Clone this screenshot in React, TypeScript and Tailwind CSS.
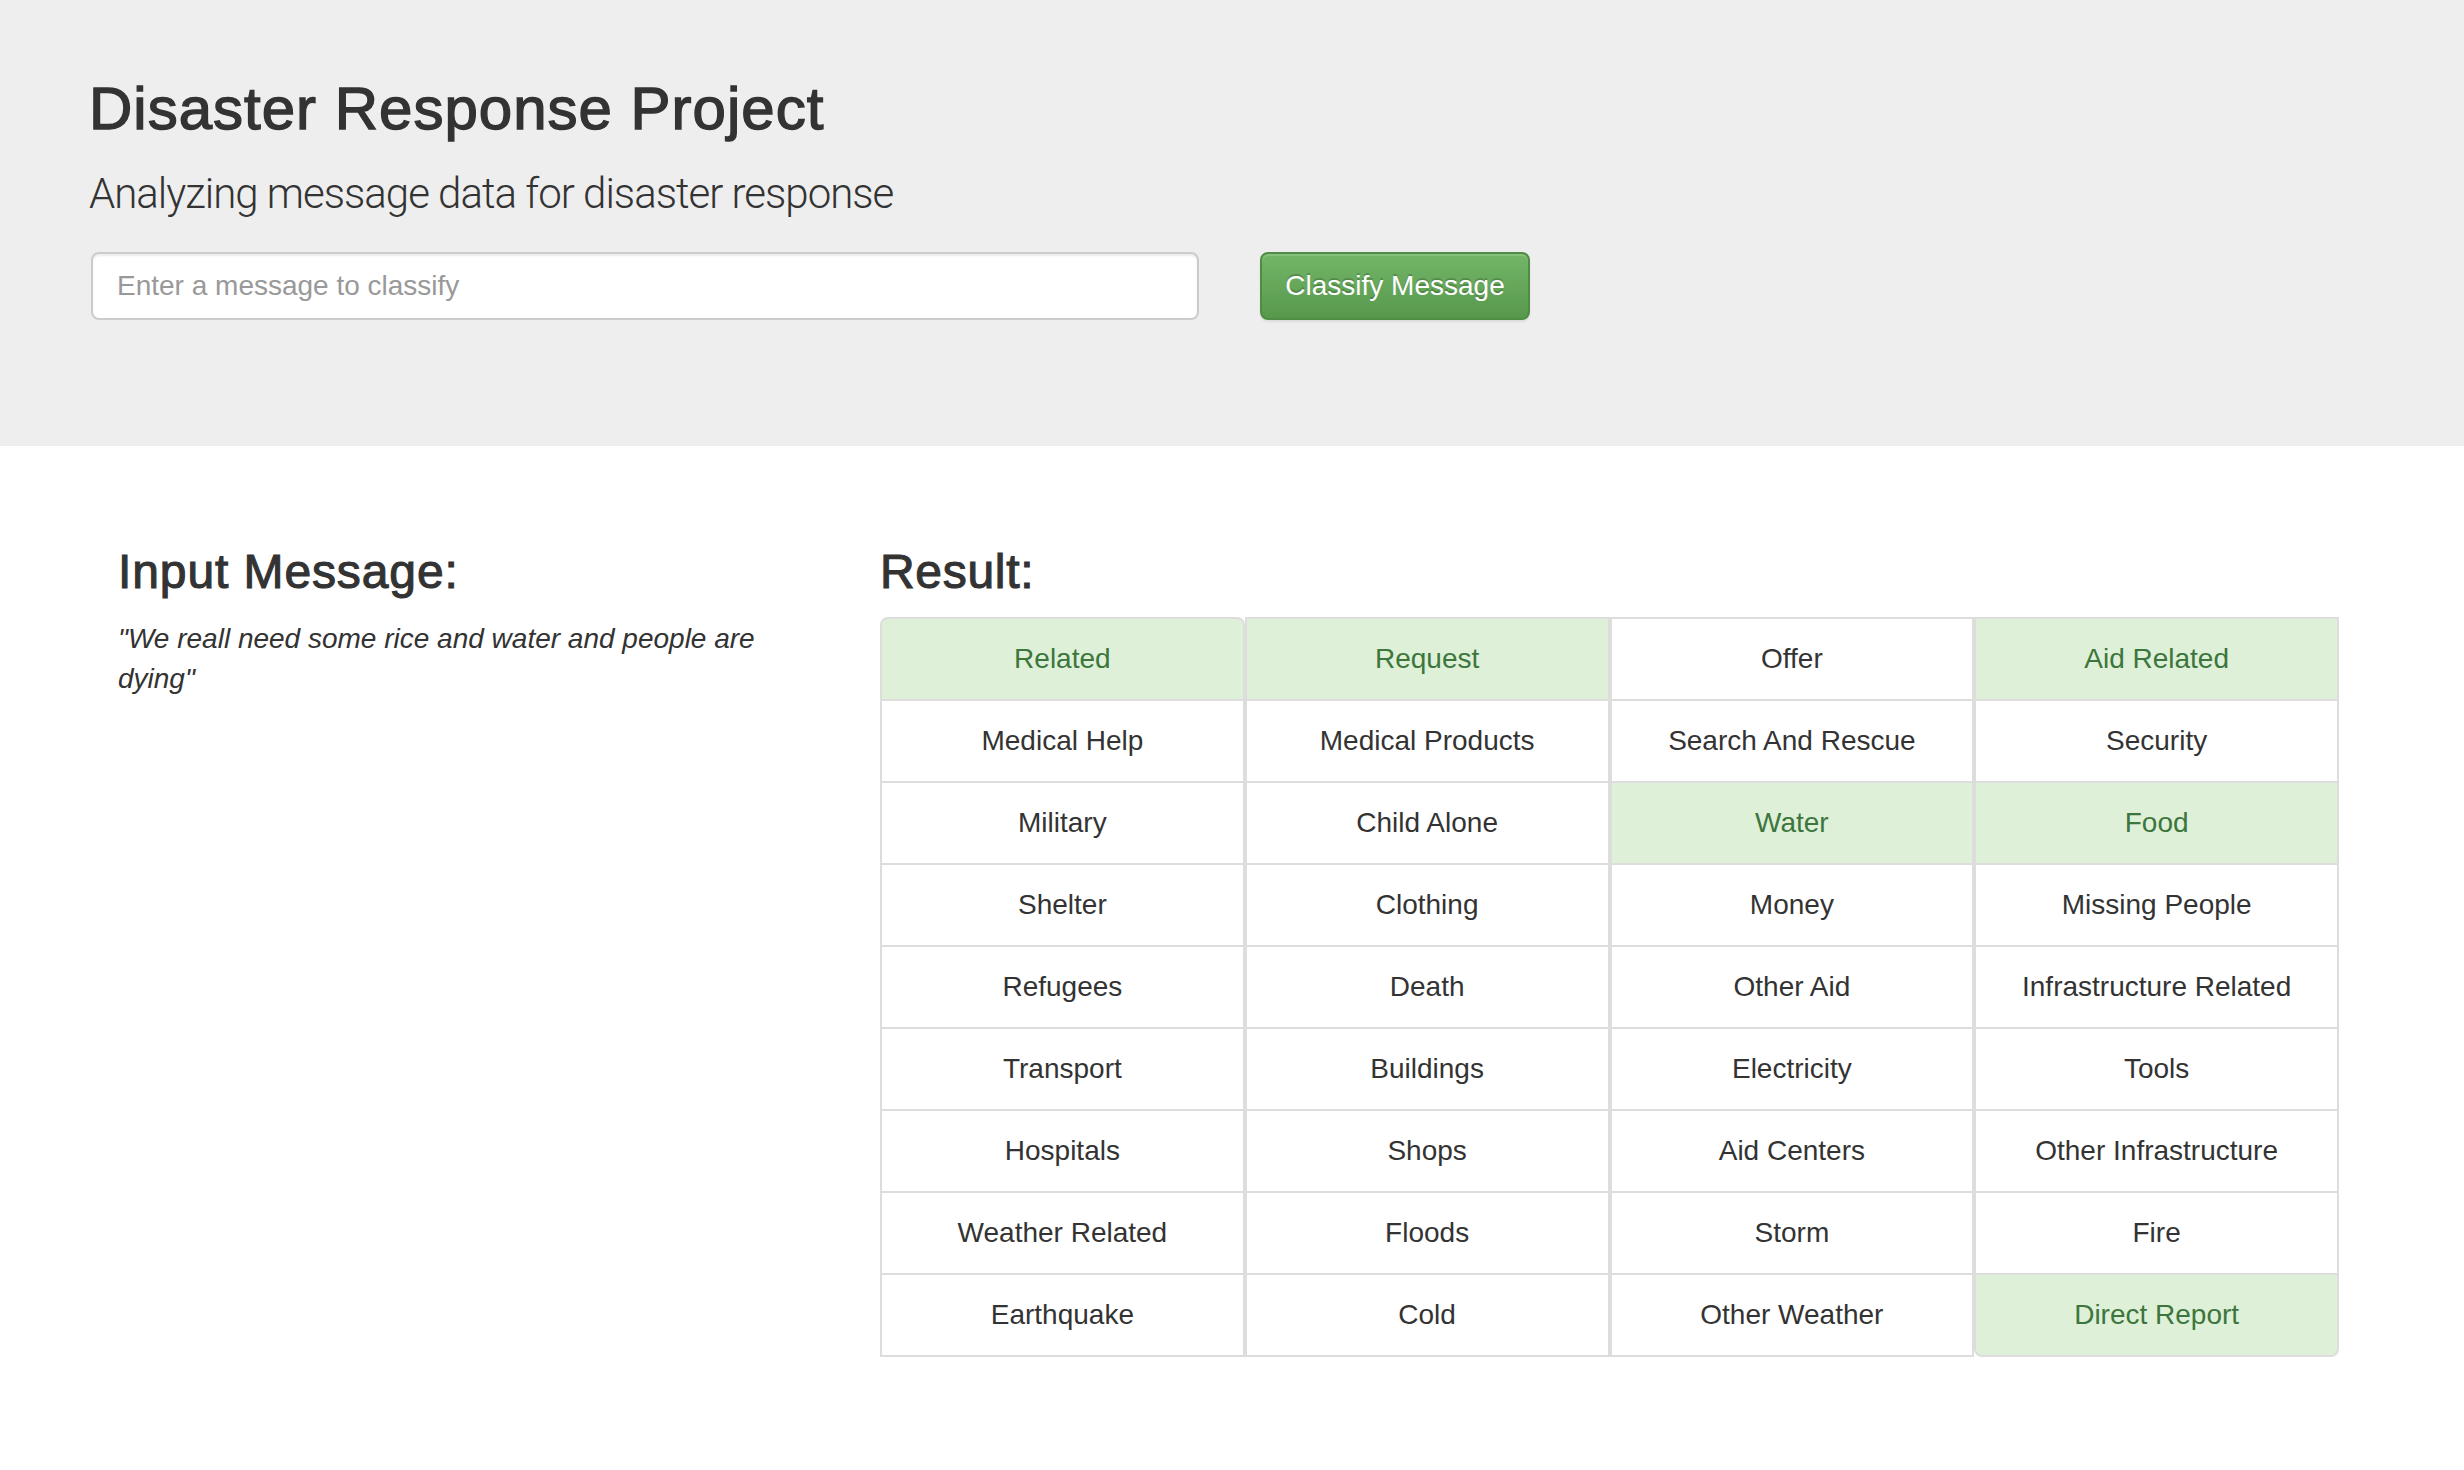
import React from "react";

const cells: { label: string; ok?: boolean }[] = [
  { label: "Related", ok: true },
  { label: "Request", ok: true },
  { label: "Offer" },
  { label: "Aid Related", ok: true },
  { label: "Medical Help" },
  { label: "Medical Products" },
  { label: "Search And Rescue" },
  { label: "Security" },
  { label: "Military" },
  { label: "Child Alone" },
  { label: "Water", ok: true },
  { label: "Food", ok: true },
  { label: "Shelter" },
  { label: "Clothing" },
  { label: "Money" },
  { label: "Missing People" },
  { label: "Refugees" },
  { label: "Death" },
  { label: "Other Aid" },
  { label: "Infrastructure Related" },
  { label: "Transport" },
  { label: "Buildings" },
  { label: "Electricity" },
  { label: "Tools" },
  { label: "Hospitals" },
  { label: "Shops" },
  { label: "Aid Centers" },
  { label: "Other Infrastructure" },
  { label: "Weather Related" },
  { label: "Floods" },
  { label: "Storm" },
  { label: "Fire" },
  { label: "Earthquake" },
  { label: "Cold" },
  { label: "Other Weather" },
  { label: "Direct Report", ok: true },
];

export default function App() {
  return (
    <div className="min-h-[1470px] bg-white text-[#333333] font-['Liberation_Sans',Arial,sans-serif]">
      <div className="bg-[#eeeeee] h-[446px] pl-[89px] pt-[76px]">
        <h1 className="text-[60px] leading-[66px] font-normal tracking-[1px] [-webkit-text-stroke:1.4px_#333333]">
          Disaster Response Project
        </h1>
        <p className="mt-[22px] text-[42px] leading-[59px] font-light tracking-[-1px] font-['Roboto','Liberation_Sans',sans-serif]">
          Analyzing message data for disaster response
        </p>
        <div className="mt-[29px] flex items-center gap-[61px] pl-[2px]">
          <input
            type="text"
            placeholder="Enter a message to classify"
            className="w-[1108px] h-[68px] rounded-[8px] border-2 border-[#cccccc] bg-white px-[24px] text-[28px] text-[#555555] placeholder:text-[#999999] shadow-[inset_0_2px_2px_rgba(0,0,0,0.075)] outline-none"
          />
          <button className="w-[270px] h-[68px] rounded-[8px] border-2 border-[#4f8d45] bg-gradient-to-b from-[#74b668] to-[#57984c] text-white text-[28px] [text-shadow:0_-2px_0_rgba(0,0,0,0.2)] shadow-[inset_0_2px_0_rgba(255,255,255,0.15),0_2px_2px_rgba(0,0,0,0.075)]">
            Classify Message
          </button>
        </div>
      </div>

      <div className="flex pt-[99px]">
        <div className="ml-[118px] w-[680px]">
          <h3 className="text-[48px] leading-[53px] font-normal tracking-[0.9px] [-webkit-text-stroke:1.1px_#333333]">
            Input Message:
          </h3>
          <p className="mt-[21px] text-[28px] leading-[40px] italic">
            "We reall need some rice and water and people are dying"
          </p>
        </div>
        <div className="ml-[82px] w-[1459px]">
          <h3 className="text-[48px] leading-[53px] font-normal tracking-[0.7px] [-webkit-text-stroke:1.1px_#333333]">
            Result:
          </h3>
          <div className="mt-[19px] grid grid-cols-4">
            {cells.map((c, i) => (
              <div
                key={c.label}
                className={
                  "relative h-[84px] mb-[-2px] flex items-center justify-center border-2 border-[#dddddd] text-[28px] " +
                  (c.ok ? "bg-[#dff0d8] text-[#3c763d] " : "bg-white text-[#333333] ") +
                  (i === 0 ? "rounded-tl-[8px] rounded-tr-[8px] " : "") +
                  (i === cells.length - 1 ? "rounded-bl-[8px] rounded-br-[8px] " : "")
                }
              >
                {c.label}
              </div>
            ))}
          </div>
        </div>
      </div>
    </div>
  );
}
